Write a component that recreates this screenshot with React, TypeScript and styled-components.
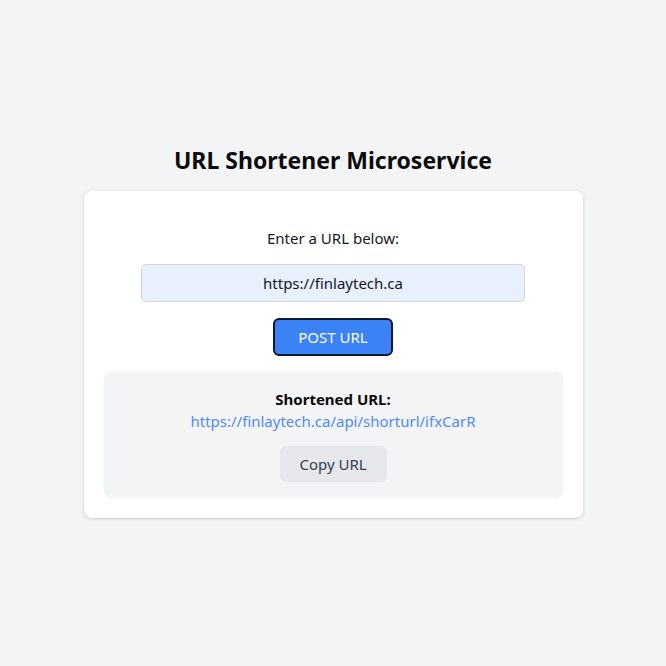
import React from "react";
import styled, { createGlobalStyle } from "styled-components";

const Global = createGlobalStyle`
  html, body { margin: 0; padding: 0; background: #f3f4f6; }
  body { font-family: "Noto Sans", "Open Sans", sans-serif; color: #111827; }
  * { box-sizing: border-box; }
`;

const Page = styled.main`
  min-height: 666px;
  display: flex;
  flex-direction: column;
  align-items: center;
  justify-content: center;
  padding-bottom: 5px;
`;

const Title = styled.h1`
  margin: 0 0 15px;
  font-size: 23px;
  line-height: 32px;
  font-weight: 700;
  color: #0b0b0b;
`;

const Card = styled.section`
  width: 499px;
  background: #ffffff;
  border-radius: 8px;
  box-shadow: 0 1px 4px rgba(0, 0, 0, 0.12), 0 1px 2px rgba(0, 0, 0, 0.06);
  padding: 35px 20px 20px;
  display: flex;
  flex-direction: column;
  align-items: center;
`;

const Label = styled.label`
  font-size: 15px;
  line-height: 24px;
  color: #111827;
  margin-bottom: 14px;
`;

const UrlInput = styled.input`
  width: 384px;
  height: 38px;
  border: 1px solid #d1d5db;
  border-radius: 5px;
  background: #e8f0fe;
  text-align: center;
  font-family: inherit;
  font-size: 15px;
  color: #111827;
  outline: none;
  margin-bottom: 16px;
`;

const PrimaryButton = styled.button`
  width: 120px;
  height: 38px;
  border: 2px solid #111827;
  border-radius: 6px;
  background: #3b82f6;
  color: #ffffff;
  font-family: inherit;
  font-size: 15px;
  margin-bottom: 16px;
`;

const Result = styled.div`
  width: 100%;
  background: #f3f4f6;
  border-radius: 8px;
  box-shadow: 0 0 2px rgba(0, 0, 0, 0.08);
  padding: 16px 16px 16px;
  display: flex;
  flex-direction: column;
  align-items: center;
`;

const ResultLabel = styled.div`
  font-size: 15px;
  line-height: 22px;
  font-weight: 700;
  color: #0b0b0b;
`;

const ShortLink = styled.a`
  font-size: 15px;
  line-height: 22px;
  color: #5089f7;
  text-decoration: none;
  margin-bottom: 14px;
`;

const SecondaryButton = styled.button`
  width: 107px;
  height: 36px;
  border: none;
  border-radius: 6px;
  background: #e5e7eb;
  color: #374151;
  font-family: inherit;
  font-size: 15px;
`;

export default function App() {
  return (
    <>
      <Global />
      <Page>
        <Title>URL Shortener Microservice</Title>
        <Card>
          <Label htmlFor="url">Enter a URL below:</Label>
          <UrlInput id="url" defaultValue="https://finlaytech.ca" />
          <PrimaryButton>POST URL</PrimaryButton>
          <Result>
            <ResultLabel>Shortened URL:</ResultLabel>
            <ShortLink href="#">https://finlaytech.ca/api/shorturl/ifxCarR</ShortLink>
            <SecondaryButton>Copy URL</SecondaryButton>
          </Result>
        </Card>
      </Page>
    </>
  );
}
